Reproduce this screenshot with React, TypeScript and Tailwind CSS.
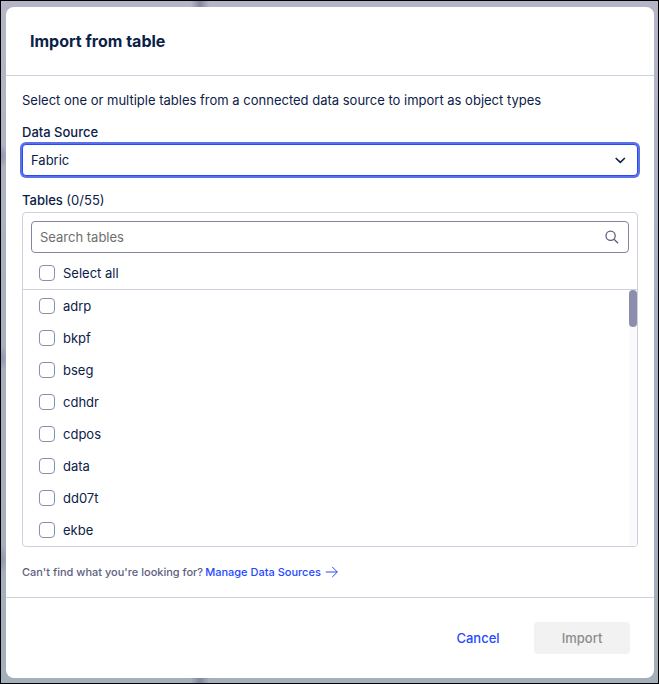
import * as React from "react";

const tables = ["adrp", "bkpf", "bseg", "cdhdr", "cdpos", "data", "dd07t", "ekbe"];

const TOTAL_TABLES = 55;

type CheckboxRowProps = {
  label: string;
  checked: boolean;
  onChange: () => void;
};

function CheckboxRow({ label, checked, onChange }: CheckboxRowProps) {
  return (
    <label className="flex h-8 items-center gap-2 px-4">
      <input
        type="checkbox"
        checked={checked}
        onChange={onChange}
        className="size-4 appearance-none rounded border border-[#8b8eae] bg-white checked:border-[#2549ff] checked:bg-[#2549ff]"
      />
      <span>{label}</span>
    </label>
  );
}

function ChevronIcon() {
  return (
    <svg viewBox="0 0 16 16" fill="none" stroke="currentColor" strokeWidth="1.6" className="pointer-events-none absolute top-2 right-2.5 size-4">
      <path d="M3.7 6 8.3 10.4l4.6-4.4" />
    </svg>
  );
}

function SearchIcon() {
  return (
    <svg viewBox="0 0 16 16" fill="none" stroke="currentColor" strokeWidth="1.3" className="size-4 shrink-0 text-[#5d607f]">
      <circle cx="6.6" cy="6.8" r="4.6" />
      <path d="m10 10.2 4.1 4.1" />
    </svg>
  );
}

function ArrowIcon() {
  return (
    <svg viewBox="0 0 14 12" fill="none" stroke="currentColor" className="h-3 w-3.5">
      <path d="M.8 6h11.6M7.2.9 12.3 6l-5.1 5.1" />
    </svg>
  );
}

export default function App() {
  const [query, setQuery] = React.useState("");
  const [selected, setSelected] = React.useState<string[]>([]);

  const visible = tables.filter((name) => name.includes(query.toLowerCase()));
  const allSelected = selected.length === tables.length;

  const toggle = (name: string) => {
    setSelected((prev) =>
      prev.includes(name) ? prev.filter((item) => item !== name) : [...prev, name]
    );
  };

  return (
    <div className="min-h-screen border border-black bg-[radial-gradient(ellipse_8px_12px_at_0_155px,#8f94ad,transparent),radial-gradient(ellipse_8px_12px_at_0_357px,#8f94ad,transparent),radial-gradient(ellipse_8px_14px_at_0_558px,#8f94ad,transparent),linear-gradient(90deg,transparent_190px,#82869f_199px,transparent_208px),linear-gradient(180deg,#b4b6c7,#a6b0bf_50%,#a4afbc)] pt-1.5 pr-1 pb-[5px] pl-[5px] font-['Inter',sans-serif] text-[13px] leading-4 text-[#0b2147]">
      <div role="dialog" aria-labelledby="dialog-title" className="rounded-lg bg-white">
        {/* Header */}
        <header className="border-b border-[#cfd0dd] px-6 py-[22px]">
          <h1 id="dialog-title" className="text-base leading-6 font-bold">Import from table</h1>
        </header>

        {/* Body */}
        <main className="p-4">
          <p>Select one or multiple tables from a connected data source to import as object types</p>

          <label htmlFor="source" className="mt-4 block font-medium">Data Source</label>
          <div className="relative mt-1">
            <select
              id="source"
              className="h-8 w-full appearance-none rounded border border-[#2549ff] bg-white px-2 ring-2 ring-[#5a71e8] outline-none"
            >
              <option>Fabric</option>
            </select>
            <ChevronIcon />
          </div>

          <h2 className="mt-4 font-medium">
            Tables <span className="font-normal">({selected.length}/{TOTAL_TABLES})</span>
          </h2>
          <div className="mt-1 overflow-hidden rounded border border-[#cfd0dd]">
            <div className="px-2 pt-2">
              <div className="flex h-8 items-center rounded border border-[#8285a6] px-2">
                <input
                  type="text"
                  aria-label="Search tables"
                  placeholder="Search tables"
                  value={query}
                  onChange={(e) => setQuery(e.target.value)}
                  className="min-w-0 flex-1 outline-none placeholder:text-[#6e6e6e]"
                />
                <SearchIcon />
              </div>
            </div>
            <div className="border-b border-[#cfd0dd] pt-1">
              <CheckboxRow
                label="Select all"
                checked={allSelected}
                onChange={() => setSelected(allSelected ? [] : tables)}
              />
            </div>
            <div className="flex h-64">
              <div className="flex-1">
                {visible.map((name) => (
                  <CheckboxRow
                    key={name}
                    label={name}
                    checked={selected.includes(name)}
                    onChange={() => toggle(name)}
                  />
                ))}
              </div>
              <div className="w-2 bg-[#fafafc]">
                <div className="h-[37px] rounded-full bg-[#8c8eae]" />
              </div>
            </div>
          </div>

          <p className="mt-4 flex items-center gap-0.5 text-[11px] leading-[18px] font-medium text-[#5d607f]">
            Can't find what you're looking for?
            <a href="#" className="flex items-center gap-1 text-[#2549ff]">
              Manage Data Sources
              <ArrowIcon />
            </a>
          </p>
        </main>

        {/* Actions */}
        <footer className="flex justify-end gap-2 border-t border-[#cfd0dd] p-6 font-medium">
          <button type="button" className="h-8 w-24 rounded text-[#2549ff]">Cancel</button>
          <button type="button" disabled className="h-8 w-24 rounded bg-[#f2f2f2] text-[#8c8c8c]">Import</button>
        </footer>
      </div>
    </div>
  );
}
